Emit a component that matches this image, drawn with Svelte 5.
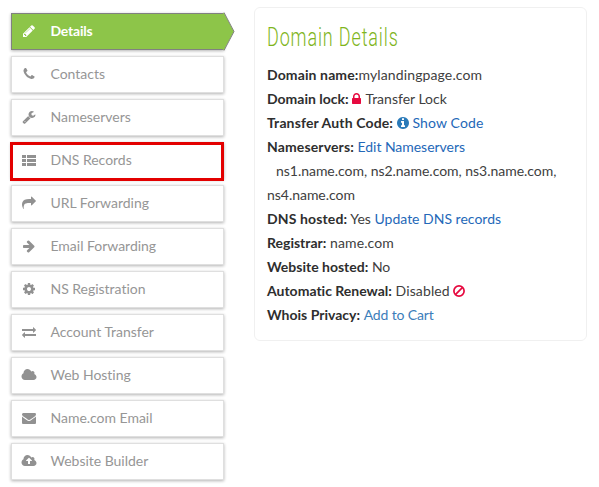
<script>
  const cloud = 'M1984 1152q0 159-112.5 271.5t-271.5 112.5h-1088q-185 0-316.5-131.5t-131.5-316.5q0-132 71-241.5t187-163.5q-2-28-2-43 0-212 150-362t362-150q158 0 286.5 88t187.5 230q70-62 166-62 106 0 181 75t75 181q0 75-41 138 129 30 213 134.5t84 239.5z';
  const items = [
    { label: 'Details', active: true, d: 'M491 1536l91-91-235-235-91 91v107h128v128h107zm523-928q0-22-22-22-10 0-17 7l-542 542q-7 7-7 17 0 22 22 22 10 0 17-7l542-542q7-7 7-17zm-54-192l416 416-832 832h-416v-416zm683 96q0 53-37 90l-166 166-416-416 166-165q36-38 90-38 53 0 91 38l235 234q37 39 37 91z' },
    { label: 'Contacts', d: 'M1600 1240q0 27-10 70.5t-21 68.5q-21 50-122 106-94 51-186 51-27 0-52.5-3.5t-57.5-12.5-47.5-14.5-55.5-20.5-49-18q-98-35-175-83-128-79-264.5-215.5t-215.5-264.5q-48-77-83-175-3-9-18-49t-20.5-55.5-14.5-47.5-12.5-57.5-3.5-52.5q0-92 51-186 56-101 106-122 25-11 68.5-21t70.5-10q14 0 21 3 18 6 53 76 11 19 30 54t35 63.5 31 53.5q3 4 17.5 25t21.5 35.5 7 28.5q0 20-28.5 50t-62 55-62 53-28.5 46q0 9 5 22.5t8.5 20.5 14 24 11.5 19q76 137 174 235t235 174q2 1 19 11.5t24 14 20.5 8.5 22.5 5q18 0 46-28.5t53-62 55-62 50-28.5q14 0 28.5 7t35.5 21.5 25 17.5q25 15 53.5 31t63.5 35 54 30q70 35 76 53 3 7 3 21z' },
    { label: 'Nameservers', d: 'M448 1472q0-26-19-45t-45-19-45 19-19 45 19 45 45 19 45-19 19-45zm644-420l-682 682q-37 37-90 37-52 0-91-37l-106-108q-38-36-38-90 0-53 38-91l681-681q39 98 114.5 173.5t173.5 114.5zm634-435q0 39-23 106-47 134-164.5 217.5t-258.5 83.5q-185 0-316.5-131.5t-131.5-316.5 131.5-316.5 316.5-131.5q58 0 121.5 16.5t107.5 46.5q16 11 16 28t-16 28l-293 169v224l193 107q5-3 79-48.5t135.5-81 70.5-35.5q15 0 23.5 10t8.5 25z' },
    { label: 'DNS Records', marked: true, d: 'M0 256h512v384H0zM640 256h1152v384H640zM0 768h512v384H0zM640 768h1152v384H640zM0 1280h512v384H0zM640 1280h1152v384H640z' },
    { label: 'URL Forwarding', d: 'M1792 640q0 26-19 45l-512 512q-19 19-45 19t-45-19-19-45v-256h-224q-98 0-175.5 6t-154 21.5-133 42.5-105.5 69.5-80 101-48.5 138.5-17.5 181q0 55 5 123 0 6 2.5 23.5t2.5 26.5q0 15-8.5 25t-23.5 10q-16 0-28-17-7-9-13-22t-13.5-30-10.5-24q-127-285-127-451 0-199 53-333 162-403 875-403h224v-256q0-26 19-45t45-19 45 19l512 512q19 19 19 45z' },
    { label: 'Email Forwarding', d: 'M1600 960q0 54-37 91l-651 651q-39 37-91 37-51 0-90-37l-75-75q-38-38-38-91t38-91l293-293h-704q-52 0-84.5-37.5t-32.5-90.5v-128q0-53 32.5-90.5t84.5-37.5h704l-293-294q-38-36-38-90t38-90l75-75q38-38 90-38 53 0 91 38l651 651q37 35 37 90z' },
    { label: 'NS Registration', d: 'M1152 896q0-106-75-181t-181-75-181 75-75 181 75 181 181 75 181-75 75-181zm512-109v222q0 12-8 23t-20 13l-185 28q-19 54-39 91 35 50 107 138 10 12 10 25t-9 23q-27 37-99 108t-94 71q-12 0-26-9l-138-108q-44 23-91 38-16 136-29 186-7 28-36 28h-222q-14 0-24.5-8.5t-11.5-21.5l-28-184q-49-16-90-37l-141 107q-10 9-25 9-14 0-25-11-126-114-165-168-7-10-7-23 0-12 8-23 15-21 51-66.5t54-70.5q-27-50-41-99l-183-27q-13-2-21-12.5t-8-23.5v-222q0-12 8-23t19-13l186-28q14-46 39-92-40-57-107-138-10-12-10-24 0-10 9-23 26-36 98.5-107.5t94.5-71.5q13 0 26 10l138 107q44-23 91-38 16-136 29-186 7-28 36-28h222q14 0 24.5 8.5t11.5 21.5l28 184q49 16 90 37l142-107q9-9 24-9 13 0 25 10 129 119 165 170 7 8 7 22 0 12-8 23-15 21-51 66.5t-54 70.5q26 50 41 98l183 28q13 2 21 12.5t8 23.5z' },
    { label: 'Account Transfer', d: 'M1792 1184v192q0 13-9.5 22.5t-22.5 9.5h-1376v192q0 13-9.5 22.5t-22.5 9.5q-12 0-24-10l-319-320q-9-9-9-22 0-14 9-23l320-320q9-9 23-9 13 0 22.5 9.5t9.5 22.5v192h1376q13 0 22.5 9.5t9.5 22.5zm0-544q0 14-9 23l-320 320q-9 9-23 9-13 0-22.5-9.5t-9.5-22.5v-192h-1376q-13 0-22.5-9.5t-9.5-22.5v-192q0-13 9.5-22.5t22.5-9.5h1376v-192q0-14 9-23t23-9q12 0 24 10l319 319q9 9 9 23z' },
    { label: 'Web Hosting', wide: true, d: cloud },
    { label: 'Name.com Email', d: 'M1792 710v794q0 66-47 113t-113 47h-1472q-66 0-113-47t-47-113v-794q44 49 101 87 362 246 497 345 57 42 92.5 65.5t94.5 48 110 24.5h2q51 0 110-24.5t94.5-48 92.5-65.5q170-123 498-345 57-39 100-87zm0-294q0 79-49 151t-122 123q-376 261-468 325-10 7-42.5 31t-54 38.5-52 32.5-57.5 27-50 9h-2q-23 0-50-9t-57.5-27-52-32.5-54-38.5-42.5-31q-91-64-262-182.5t-205-142.5q-62-42-117-115.5t-55-136.5q0-78 41.5-130t118.5-52h1472q65 0 112.5 47t47.5 113z' },
    { label: 'Website Builder', wide: true, d: cloud + 'M1408 864q0-14-9-23l-352-352q-9-9-23-9t-23 9l-351 351q-10 12-10 24 0 14 9 23t23 9h224v352q0 13 9.5 22.5t22.5 9.5h192q13 0 22.5-9.5t9.5-22.5v-352h224q13 0 22.5-9.5t9.5-22.5z' }
  ];
</script>

<div class="page">
  <nav>
    {#each items as item}
      <div class="item" class:active={item.active}>
        <svg class="icon" class:wide={item.wide} viewBox={item.wide ? '0 0 2048 1792' : '0 0 1792 1792'}><path fill-rule="evenodd" d={item.d} /></svg>
        <span>{item.label}</span>
        {#if item.active}
          <svg class="tip" viewBox="0 0 12 39"><path d="M0 1L1 1L11 19.5L1 38L0 38Z" fill="#8dc549" /><path d="M1 .5L11 19.5L1 38.5" fill="none" stroke="#818181" /></svg>
        {/if}
        {#if item.marked}<div class="mark"></div>{/if}
      </div>
    {/each}
  </nav>
  <section>
    <h1>Domain Details</h1>
    <p class="loose"><b>Domain name:</b>mylandingpage.com</p>
    <p><b>Domain lock:</b> <svg class="lock" viewBox="320 128 1152 1408"><path fill-rule="evenodd" d="M640 768h512v-192q0-106-75-181t-181-75-181 75-75 181v192zm832 96v576q0 40-28 68t-68 28h-960q-40 0-68-28t-28-68v-576q0-40 28-68t68-28h32v-192q0-184 132-316t316-132 316 132 132 316v192h32q40 0 68 28t28 68z" /></svg> Transfer Lock</p>
    <p class="medium"><b>Transfer Auth Code:</b> <svg class="info" viewBox="128 128 1536 1536"><path fill-rule="evenodd" d="M1152 1376v-160q0-14-9-23t-23-9h-96v-512q0-14-9-23t-23-9h-320q-14 0-23 9t-9 23v160q0 14 9 23t23 9h96v320h-96q-14 0-23 9t-9 23v160q0 14 9 23t23 9h448q14 0 23-9t9-23zm-128-896v-160q0-14-9-23t-23-9h-192q-14 0-23 9t-9 23v160q0 14 9 23t23 9h192q14 0 23-9t9-23zm640 416q0 209-103 385.5t-279.5 279.5-385.5 103-385.5-103-279.5-279.5-103-385.5 103-385.5 279.5-279.5 385.5-103 385.5 103 279.5 279.5 103 385.5z" /></svg> <a href="#code">Show Code</a></p>
    <p><b class="medium">Nameservers:</b> <a class="snug" href="#ns">Edit Nameservers</a></p>
    <p class="servers">ns1.name.com, ns2.name.com, ns3.name.com, ns4.name.com</p>
    <p><b class="medium">DNS hosted:</b> Yes <a href="#dns">Update DNS records</a></p>
    <p><b>Registrar:</b> <span class="medium">name.com</span></p>
    <p><b>Website hosted:</b> No</p>
    <p><b>Automatic Renewal:</b> <span class="medium">Disabled</span> <svg class="ban" viewBox="0 0 12 12"><circle cx="6" cy="6" r="5.1" /><path d="M2.4 9.6L9.6 2.4" /></svg></p>
    <p><b>Whois Privacy:</b> <a class="pale" href="#cart">Add to Cart</a></p>
  </section>
</div>

<style>
  :global(body) { background: #fff; }
  .page { display: flex; align-items: flex-start; box-sizing: border-box; width: 599px; height: 487px; padding: 7px 0 0 11px; overflow: hidden; font: 14px/24px Lato, "Liberation Sans", sans-serif; font-variant-ligatures: none; color: #404040; }
  nav { display: flex; flex-direction: column; gap: 6px; width: 213px; margin: 6px 30px 0 0; }
  .item { position: relative; display: flex; align-items: center; box-sizing: border-box; height: 37px; padding-left: 10px; border: 1px solid #dfdfdf; box-shadow: 0 1px 3px rgba(0, 0, 0, .3); background: #fff; color: #969696; }
  .item span { margin: 0 0 2px 14.5px; letter-spacing: -.02px; }
  .icon { width: 14px; height: 14px; margin-bottom: 2px; fill: #919191; flex: none; }
  .icon.wide { width: 16px; margin: 0 -1px 2px; }
  .active { background: #8dc549; border-color: #818181; border-right: 0; color: #fff; font-weight: 700; }
  .active span { letter-spacing: -.2px; }
  .active .icon { fill: #fff; }
  .tip { position: absolute; left: 211px; top: -2px; width: 12px; height: 39px; }
  .mark { position: absolute; left: -2px; top: -1px; width: 208px; height: 33px; border: 3px solid #e30000; }
  section { box-sizing: border-box; width: 333px; height: 334px; padding: 16px 11px 0 12px; border: 1px solid #f0f0f0; border-radius: 6px; }
  h1 { margin: 0 0 11px; font: 300 25px/27px Roboto, sans-serif; padding-bottom: 1px; letter-spacing: 1.2px; color: #7fb51d; white-space: nowrap; transform: scaleX(.72); transform-origin: left; }
  p { margin: 0; white-space: nowrap; }
  b { color: #2e2e2e; }
  a { color: #2468b8; text-decoration: none; }
  a.pale { color: #3c7dba; letter-spacing: -.15px; }
  .loose { letter-spacing: .12px; }
  .medium { letter-spacing: .13px; }
  .snug { letter-spacing: -.04px; }
  .servers { text-indent: 9px; letter-spacing: -.03px; white-space: normal; }
  .lock { width: 9px; height: 11px; margin-right: 1px; fill: #e6093f; }
  .info { width: 12px; height: 12px; fill: #2a7ab9; vertical-align: -1px; }
  .ban { width: 12px; height: 12px; fill: none; stroke: #e6093f; stroke-width: 1.7; vertical-align: -1px; }
</style>
